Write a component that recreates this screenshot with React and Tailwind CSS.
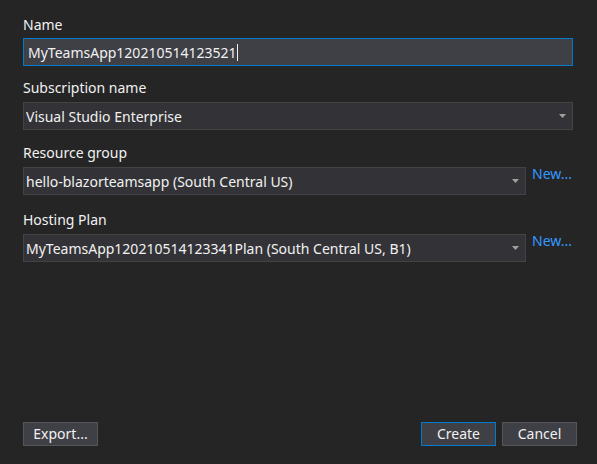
// Azure App Service publish dialog (dark theme)

const font = { fontFamily: '"Noto Sans", "Open Sans", sans-serif' };

const Caret = () => (
  <svg width="7" height="4" viewBox="0 0 7 4" className="shrink-0">
    <path d="M0 0h7L3.5 4z" fill="#a0a0a0" />
  </svg>
);

const Select = ({ value, width }) => (
  <div
    className={`flex h-[28px] ${width} items-center justify-between border border-[#434346] bg-[#333337] pl-[2px] pr-[6px]`}
  >
    <span className="truncate text-[14px] text-[#f1f1f1]">{value}</span>
    <Caret />
  </div>
);

const NewLink = () => (
  <span className="ml-[6px] cursor-pointer text-[14px] leading-none text-[#3399ff]">New...</span>
);

const Button = ({ children, primary }) => (
  <button
    type="button"
    className={`h-[24px] w-[75px] border text-[14px] leading-none text-[#f1f1f1] bg-[#3f3f46] ${
      primary ? "border-[#007acc]" : "border-[#555558]"
    }`}
  >
    {children}
  </button>
);

export default function App() {
  return (
    <div className="flex h-[464px] w-[597px] flex-col bg-[#252526] px-[23px] text-[#f1f1f1]" style={font}>
      <div className="mt-[15px] h-[20px] text-[14px] leading-[20px]">Name</div>
      <div className="mt-[3px] flex h-[28px] w-[550px] items-center border border-[#007acc] bg-[#3f3f46] pl-[4px]">
        <span className="text-[14px]">MyTeamsApp120210514123521</span>
        <span className="ml-[1px] h-[17px] w-px bg-[#f1f1f1]" />
      </div>

      <div className="mt-[12px] h-[20px] text-[14px] leading-[20px]">Subscription name</div>
      <div className="mt-[4px]">
        <Select value="Visual Studio Enterprise" width="w-[550px]" />
      </div>

      <div className="mt-[13px] h-[20px] text-[14px] leading-[20px]">Resource group</div>
      <div className="mt-[4px] flex items-start">
        <Select value="hello-blazorteamsapp (South Central US)" width="w-[503px]" />
        <NewLink />
      </div>

      <div className="mt-[15px] h-[20px] text-[14px] leading-[20px]">Hosting Plan</div>
      <div className="mt-[4px] flex items-start">
        <Select value="MyTeamsApp120210514123341Plan (South Central US, B1)" width="w-[503px]" />
        <NewLink />
      </div>

      <div className="mt-auto mb-[18px] mr-[-3px] flex items-center">
        <Button>Export...</Button>
        <div className="ml-auto flex gap-[6px]">
          <Button primary>Create</Button>
          <Button>Cancel</Button>
        </div>
      </div>
    </div>
  );
}
